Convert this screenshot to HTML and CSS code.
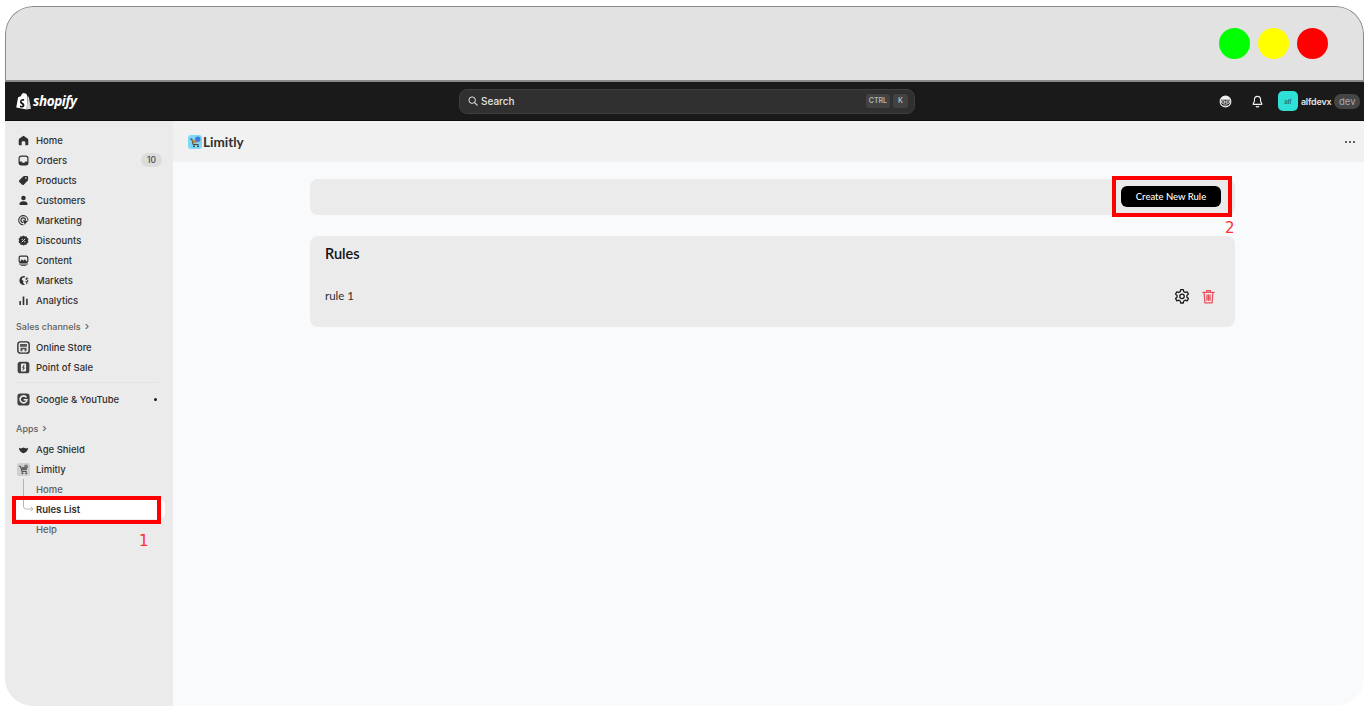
FILE: index.html
```html
<!DOCTYPE html>
<html lang="en">

<head>
  <meta charset="UTF-8" />
  <meta name="viewport" content="width=device-width, initial-scale=1.0" />
  <title>Limitly - Rules List</title>

  <link rel="stylesheet" href="styles.css">
</head>

<body>

  <div class="window">

    <!-- Window title bar -->
    <div class="titlebar">
      <span class="dot dot-green"></span>
      <span class="dot dot-yellow"></span>
      <span class="dot dot-red"></span>
    </div>

    <!-- Shopify top bar -->
    <header class="topbar">
      <div class="brand">
        <svg class="brand-bag" viewBox="0 0 16 18">
          <path fill="#fff" d="M12.2 3.6 11.4 1.6C11 .8 10.4.5 9.8.6 9.5.2 9 0 8.500 0 6.600 0 5.500 2.300 5.100 3.500L2.900 4.200C2.300 4.400 2.200 4.500 2.100 5L.3 15.500 11.400 17.600Z" />
          <path fill="#d8d8d8" d="M12.400 3.700 11.500 17.600 16 16.600 13.700 4.200C13.600 4 13.400 3.900 13.200 3.800Z" />
          <path fill="#1a1a1a" d="M8.800 6.500 8.200 8.400C7.200 7.900 5.900 8 5.900 8.900 5.900 10 9 10.300 9 13 9 15.100 6.400 16.200 4 14.900L4.500 13.100C5.500 13.800 6.900 14 7 13.100 7 11.800 4.200 11.700 4.200 9.200 4.200 7 6.800 5.600 8.800 6.500Z" />
        </svg>
        <span class="brand-name">shopify</span>
      </div>

      <div class="search">
        <svg class="search-icon" viewBox="0 0 12 12">
          <circle cx="5" cy="5" r="3.900" fill="none" stroke="#e3e3e3" stroke-width="1.200" />
          <path d="M8 8 11 11" stroke="#e3e3e3" stroke-width="1.300" stroke-linecap="round" />
        </svg>
        <span class="search-text">Search</span>
        <span class="key">CTRL</span>
        <span class="key key-k">K</span>
      </div>

      <div class="account">
        <svg class="top-icon" viewBox="0 0 14 14">
          <circle cx="7" cy="7" r="5.800" fill="none" stroke="#f1f1f1" stroke-width="1.200" />
          <path fill="#f1f1f1" d="M2 5.200C2.500 2.800 4.500 1.200 7 1.200S11.500 2.800 12 5.200Z" />
          <path fill="none" stroke="#f1f1f1" stroke-width="1" d="M2.200 6.400H6.300V8.800H3.200ZM11.800 6.400H7.700V8.800H10.800Z" />
          <path stroke="#f1f1f1" stroke-width="1" stroke-linecap="round" d="M5 10.800H9" />
        </svg>
        <svg class="top-icon top-icon-bell" viewBox="0 0 14 14">
          <path fill="none" stroke="#f1f1f1" stroke-width="1.200" stroke-linejoin="round" d="M7 1.500C4.900 1.500 3.700 3 3.700 5V6.800L2.300 9.600C2.200 9.900 2.300 10.100 2.600 10.100H11.400C11.700 10.100 11.800 9.900 11.700 9.600L10.300 6.800V5C10.300 3 9.100 1.500 7 1.500Z" />
          <path fill="none" stroke="#f1f1f1" stroke-width="1.200" stroke-linecap="round" d="M5.600 12.200C6.300 12.900 7.700 12.900 8.400 12.200" />
        </svg>
        <span class="avatar">alf</span>
        <span class="account-name">alfdevx</span>
        <span class="dev-pill">dev</span>
      </div>
    </header>

    <div class="body-row">

      <!-- Admin navigation -->
      <nav class="sidebar">
        <a class="nav-item">
          <svg class="nav-icon" viewBox="0 0 12 12"><path fill="#303030" d="M6 .7 10.400 3.800C11 4.300 11.200 4.700 11.200 5.400V10C11.200 10.800 10.700 11.300 9.900 11.300H8V8.200C8 7.400 7.400 6.800 6 6.800S4 7.400 4 8.200V11.300H2.100C1.300 11.300.8 10.800.8 10V5.400C.8 4.700 1 4.300 1.600 3.800Z" /></svg>
          Home
        </a>
        <a class="nav-item">
          <svg class="nav-icon" viewBox="0 0 12 12"><rect x="1.200" y="1.200" width="9.600" height="9.600" rx="2.400" fill="none" stroke="#303030" stroke-width="1.300" /><path fill="#303030" d="M1.200 7H4C4.300 8 5 8.400 6 8.400S7.700 8 8 7H10.800V9C10.800 10.200 10.200 10.800 9 10.800H3C1.800 10.800 1.200 10.200 1.200 9Z" /></svg>
          Orders
          <span class="nav-badge">10</span>
        </a>
        <a class="nav-item">
          <svg class="nav-icon" viewBox="0 0 12 12"><path fill="#303030" d="M6.800 1H10C10.600 1 11 1.400 11 2V5.200C11 5.700 10.800 6.100 10.500 6.400L6.300 10.600C5.800 11.100 5 11.100 4.500 10.600L1.400 7.500C.9 7 .9 6.200 1.400 5.700L5.600 1.500C5.900 1.200 6.300 1 6.800 1ZM8.600 2.500A.9.9 0 1 0 8.600 4.300.9.9 0 0 0 8.600 2.500Z" /></svg>
          Products
        </a>
        <a class="nav-item">
          <svg class="nav-icon" viewBox="0 0 12 12"><circle cx="6" cy="3.300" r="2.500" fill="#303030" /><path fill="#303030" d="M1.500 10.200C1.500 8 3.300 6.800 6 6.800S10.500 8 10.500 10.200C10.500 10.800 10.200 11 9.700 11H2.300C1.800 11 1.500 10.800 1.500 10.200Z" /></svg>
          Customers
        </a>
        <a class="nav-item">
          <svg class="nav-icon" viewBox="0 0 12 12"><path fill="none" stroke="#303030" stroke-width="1.200" stroke-linecap="round" d="M5.500 10.700A5 5 0 1 1 10.800 5.800M5.500 8.100A2.500 2.500 0 1 1 8.200 5.700" /><path fill="#303030" d="M5.300 5.300 11 7.200 8.700 8.400 7.500 10.800Z" /></svg>
          Marketing
        </a>
        <a class="nav-item">
          <svg class="nav-icon" viewBox="0 0 12 12"><path fill="#303030" d="M6 .5 7.500 1.500 9.300 1.400 9.900 3.100 11.400 4.200 10.800 6 11.400 7.800 9.900 8.900 9.300 10.600 7.500 10.500 6 11.500 4.500 10.500 2.700 10.600 2.100 8.900.6 7.800 1.200 6 .6 4.200 2.100 3.100 2.700 1.400 4.500 1.500Z" /><path stroke="#ebebeb" stroke-width="1" stroke-linecap="round" d="M4.400 7.600 7.600 4.400" /><circle cx="4.600" cy="4.700" r=".7" fill="#ebebeb" /><circle cx="7.400" cy="7.300" r=".7" fill="#ebebeb" /></svg>
          Discounts
        </a>
        <a class="nav-item">
          <svg class="nav-icon" viewBox="0 0 12 12"><rect x="1.300" y="1.200" width="9.400" height="6.900" rx="1.500" fill="none" stroke="#303030" stroke-width="1.300" /><path fill="#303030" d="M2 7.500 4.300 4.700 6 6.200 7.500 4.700 10 7.500ZM1.200 9.300H10.800V10.300H1.200ZM3 10.800H9V11.600H3Z" /></svg>
          Content
        </a>
        <a class="nav-item">
          <svg class="nav-icon" viewBox="0 0 12 12"><path fill="#303030" d="M6.500 1A5 5 0 1 0 6.500 11C7.200 11 7.500 10.500 7 10L5.500 8.500 6 6.500 4 5 5 3 7.500 2.500C8 1.700 7.500 1 6.500 1Z" /><path fill="none" stroke="#303030" stroke-width="1.100" stroke-linecap="round" d="M10.700 3.600C10 3 8.700 3.300 8.700 4.300S10.800 5.300 10.800 6.500 9.300 7.900 8.500 7.200M9.600 8.800V9.600" /></svg>
          Markets
        </a>
        <a class="nav-item">
          <svg class="nav-icon" viewBox="0 0 12 12"><path fill="#303030" d="M1.500 6.500H3.200V10.800H1.500ZM5.100 1.500H6.900V10.800H5.100ZM8.900 4.200H10.600V10.800H8.900Z" /></svg>
          Analytics
        </a>

        <div class="nav-label nav-label-sales">Sales channels <span class="nav-chevron">&rsaquo;</span></div>
        <a class="nav-item">
          <svg class="nav-icon nav-icon-big" viewBox="0 0 12 12"><rect x=".8" y=".8" width="10.400" height="10.400" rx="2.300" fill="none" stroke="#303030" stroke-width="1.300" /><path fill="#555" d="M2.800 2.800H9.200V5.400H2.800ZM3.200 6.300H8.800V9.400H7V7.500H5V9.400H3.200Z" /></svg>
          Online Store
        </a>
        <a class="nav-item">
          <svg class="nav-icon nav-icon-big" viewBox="0 0 12 12"><rect x=".6" y=".6" width="10.800" height="10.800" rx="2.400" fill="#404040" /><rect x="3.600" y="2.400" width="4.800" height="7.200" rx=".8" fill="#ebebeb" /><path stroke="#303030" stroke-width=".9" d="M6.600 3.600 5.300 6.300H6.800L5.400 8.400" fill="none" /></svg>
          Point of Sale
        </a>

        <div class="nav-divider"></div>

        <a class="nav-item">
          <svg class="nav-icon nav-icon-big" viewBox="0 0 12 12"><rect x=".4" y=".4" width="11.200" height="11.200" rx="2.600" fill="#404040" /><path fill="none" stroke="#ebebeb" stroke-width="1.500" d="M8.700 4.100A3.200 3.200 0 1 0 9.200 6.200H6.100" /></svg>
          Google &amp; YouTube
          <span class="nav-dot"></span>
        </a>

        <div class="nav-label nav-label-apps">Apps <span class="nav-chevron">&rsaquo;</span></div>
        <a class="nav-item">
          <svg class="nav-icon" viewBox="0 0 12 12"><path fill="#303030" d="M1 4.200 3.200 5 6 3.900 8.800 5 11 4.200C10.900 7.200 8.900 9.400 6 10.200 3.100 9.400 1.100 7.200 1 4.200Z" /></svg>
          Age Shield
        </a>
        <a class="nav-item">
          <svg class="nav-icon nav-icon-big" viewBox="0 0 12 12"><rect width="12" height="12" rx="2" fill="#d0d0d0" /><path fill="none" stroke="#555" stroke-width="1" d="M1.800 3H3.300L4.600 7.800H9" /><path fill="#666" d="M4 3.600H9.800L9 6.600H4.800Z" /><circle cx="8.400" cy="3" r="1.700" fill="#777" /><circle cx="5" cy="9.500" r=".9" fill="#555" /><circle cx="8.500" cy="9.500" r=".9" fill="#555" /></svg>
          Limitly
        </a>
        <div class="subnav">
          <svg class="subnav-line" viewBox="0 0 14 40"><path fill="none" stroke="#b5b5b5" stroke-width="1" d="M1.500 0V27C1.500 29 2.500 30 4.500 30H11M8.800 27.800 11 30 8.800 32.200" /></svg>
          <a class="nav-item nav-sub">Home</a>
          <a class="nav-item nav-sub nav-active">Rules List</a>
          <a class="nav-item nav-sub">Help</a>
        </div>
      </nav>

      <!-- App content -->
      <main class="main">
        <div class="app-header">
          <div class="app-title">
            <svg class="app-logo" viewBox="0 0 14 14">
              <rect width="14" height="14" rx="3" fill="#7dd8f8" />
              <path fill="none" stroke="#4b4b4b" stroke-width="1.100" d="M2 4H3.800L5.200 9.500H10.500" />
              <path fill="#d08a3c" d="M4.300 5H9.300L8.700 8H5.100Z" />
              <circle cx="9.800" cy="4.200" r="2.600" fill="#3f78d8" />
              <circle cx="6" cy="11.300" r="1" fill="#444" />
              <circle cx="10" cy="11.300" r="1" fill="#444" />
            </svg>
            Limitly
          </div>
          <div class="app-more"><span></span><span></span><span></span></div>
        </div>

        <div class="content">
          <div class="panel panel-actions">
            <button class="btn-create">Create New Rule</button>
          </div>

          <div class="panel panel-rules">
            <h2 class="panel-title">Rules</h2>
            <div class="rule-row">
              <span class="rule-name">rule 1</span>
              <svg class="rule-icon" viewBox="0 0 24 24">
                <path fill="none" stroke="#1a1a1a" stroke-width="1.900" stroke-linejoin="round" d="M10 2.500H14L14.600 5.500 16.800 6.700 19.700 5.700 21.700 9.200 19.400 11.200V13.800L21.700 15.800 19.700 19.300 16.800 18.300 14.600 19.500 14 22.500H10L9.400 19.500 7.200 18.300 4.300 19.300 2.300 15.800 4.600 13.800V11.200L2.300 9.200 4.300 5.700 7.200 6.700 9.400 5.500Z" />
                <circle cx="12" cy="12.500" r="3.400" fill="none" stroke="#1a1a1a" stroke-width="1.900" />
              </svg>
              <svg class="rule-icon rule-icon-trash" viewBox="0 0 24 24">
                <path fill="none" stroke="#e8505b" stroke-width="2" stroke-linecap="round" stroke-linejoin="round" d="M3 5.500H21M9 5.500V2.500H15V5.500M5 5.500 6.200 22H17.800L19 5.500M9.500 9.500V18M12 9.500V18M14.500 9.500V18" />
              </svg>
            </div>
          </div>
        </div>
      </main>

    </div>
  </div>

  <!-- Tutorial annotations drawn over the screenshot -->
  <div class="mark mark-rules"></div>
  <div class="mark-num mark-num-1">1</div>
  <div class="mark mark-create"></div>
  <div class="mark-num mark-num-2">2</div>

</body>

</html>
```

FILE: styles.css
```css
/* Page and window frame */
html,
body {
  margin: 0;
  padding: 0;
  height: 727px;
  background-color: #fff;
  overflow: hidden;
}

body {
  position: relative;
  font-family: Inter, "Liberation Sans", sans-serif;
  color: #303030;
}

.window {
  display: flex;
  flex-direction: column;
  margin: 6px 2px 0 5px;
  height: 700px;
  border-radius: 28px;
  overflow: hidden;
  background-color: #f9fafc;
}

/* Grey title bar with the three dots */
.titlebar {
  display: flex;
  align-items: center;
  justify-content: flex-end;
  gap: 8px;
  box-sizing: border-box;
  height: 76px;
  flex: none;
  padding-right: 35px;
  background-color: #e2e2e2;
  border: 1px solid #8a8a8a;
  border-bottom: 2px solid #8a8a8a;
  border-radius: 28px 28px 0 0;
}

.dot {
  width: 31px;
  height: 31px;
  border-radius: 50%;
}

.dot-green {
  background-color: #00ff00;
}

.dot-yellow {
  background-color: #ffff00;
}

.dot-red {
  background-color: #ff0000;
}

/* Shopify top bar */
.topbar {
  display: flex;
  align-items: center;
  box-sizing: border-box;
  height: 39px;
  flex: none;
  background-color: #1a1a1a;
  border-bottom: 1px solid #0c0c0c;
}

.brand {
  display: flex;
  align-items: center;
  gap: 2px;
  width: 454px;
  padding-left: 11px;
  box-sizing: border-box;
}

.brand-bag {
  width: 15px;
  height: 17px;
}

.brand-name {
  font-family: "Open Sans", sans-serif;
  font-size: 13.500px;
  font-style: italic;
  font-weight: 700;
  letter-spacing: -0.4px;
  color: #fff;
}

.search {
  display: flex;
  align-items: center;
  box-sizing: border-box;
  width: 456px;
  height: 25px;
  padding: 0 6px 0 8px;
  background-color: #303030;
  border: 1px solid #3f3f3f;
  border-radius: 8px;
}

.search-icon {
  width: 10px;
  height: 10px;
  margin-right: 3px;
}

.search-text {
  flex: 1;
  font-size: 10px;
  font-weight: 500;
  color: #e3e3e3;
}

.key {
  margin-left: 3px;
  padding: 3px;
  font-size: 7px;
  font-weight: 600;
  line-height: 8px;
  color: #b5b5b5;
  background-color: #424242;
  border-radius: 3px;
}

.key-k {
  padding: 3px 5px;
}

.account {
  display: flex;
  flex: 1;
  align-items: center;
  justify-content: flex-end;
  padding-right: 4px;
}

.top-icon {
  width: 13px;
  height: 13px;
}

.top-icon-bell {
  margin-left: 19px;
  margin-right: 14px;
}

.avatar {
  display: flex;
  align-items: center;
  justify-content: center;
  width: 20px;
  height: 20px;
  font-size: 6px;
  font-weight: 600;
  color: #1e6e68;
  background-color: #2ee0d6;
  border-radius: 5px;
}

.account-name {
  margin-left: 3px;
  font-size: 9px;
  font-weight: 600;
  letter-spacing: -0.2px;
  color: #e3e3e3;
}

.dev-pill {
  margin-left: 3px;
  padding: 2px 4.500px;
  font-size: 9.500px;
  line-height: 11px;
  color: #a8a8a8;
  background-color: #454545;
  border-radius: 7px;
}

/* Sidebar and main area */
.body-row {
  display: flex;
  flex: 1;
  min-height: 0;
}

.sidebar {
  box-sizing: border-box;
  width: 168px;
  padding: 9px 11px 0 8px;
  background-color: #ebebeb;
}

.nav-item {
  display: flex;
  align-items: center;
  box-sizing: border-box;
  height: 20px;
  padding-left: 5px;
  font-size: 9.500px;
  font-weight: 500;
  color: #303030;
  border-radius: 6px;
}

.nav-icon {
  flex: none;
  width: 11px;
  height: 11px;
  margin-right: 7px;
}

.nav-icon-big {
  width: 13px;
  height: 13px;
  margin-left: -1px;
  margin-right: 6px;
}

.nav-badge {
  margin-left: auto;
  padding: 2px 6px;
  font-size: 8.500px;
  line-height: 10px;
  color: #4a4a4a;
  background-color: #dcdcdc;
  border-radius: 7px;
}

.nav-dot {
  width: 3px;
  height: 3px;
  margin-left: auto;
  margin-right: 5px;
  background-color: #1a1a1a;
  border-radius: 50%;
}

.nav-label {
  display: flex;
  align-items: center;
  gap: 4px;
  height: 20px;
  padding-left: 3px;
  font-size: 9px;
  font-weight: 500;
  color: #616161;
}

.nav-label-sales {
  margin-top: 6px;
  margin-bottom: 1px;
}

.nav-label-apps {
  margin-top: 9px;
  margin-bottom: 1px;
}

.nav-chevron {
  font-size: 11px;
  line-height: 11px;
}

.nav-divider {
  height: 1px;
  margin: 5px 3px 6px;
  background-color: #e3e3e3;
}

.subnav {
  position: relative;
}

.subnav-line {
  position: absolute;
  left: 9px;
  top: 0;
  width: 14px;
  height: 40px;
}

.nav-sub {
  padding-left: 23px;
  color: #616161;
}

.nav-active {
  width: 152px;
  font-weight: 600;
  color: #303030;
  background-color: #fff;
}

.main {
  display: flex;
  flex: 1;
  flex-direction: column;
  min-width: 0;
}

.app-header {
  display: flex;
  align-items: center;
  justify-content: space-between;
  box-sizing: border-box;
  height: 41px;
  flex: none;
  padding: 0 9px 0 15px;
  background-color: #f1f1f1;
}

.app-title {
  display: flex;
  align-items: center;
  gap: 1px;
  font-family: Lato, sans-serif;
  font-size: 13.500px;
  font-weight: 700;
  color: #303030;
}

.app-logo {
  width: 14px;
  height: 14px;
}

.app-more {
  display: flex;
  gap: 2px;
}

.app-more span {
  width: 2px;
  height: 2px;
  background-color: #303030;
  border-radius: 50%;
}

.content {
  padding: 17px 129px 0 137px;
}

.panel {
  background-color: #ebebeb;
  border-radius: 8px;
}

.panel-actions {
  display: flex;
  align-items: center;
  justify-content: flex-end;
  box-sizing: border-box;
  height: 36px;
  margin-bottom: 21px;
  padding: 0 14px 2px 0;
}

.btn-create {
  width: 100px;
  height: 21px;
  padding: 0;
  font-family: Lato, sans-serif;
  font-size: 9.500px;
  font-weight: 500;
  color: #fff;
  background-color: #000;
  border: none;
  border-radius: 6px;
}

.panel-rules {
  box-sizing: border-box;
  height: 91px;
  padding: 9px 19px 0 15px;
}

.panel-title {
  margin: 0;
  font-family: Lato, sans-serif;
  font-size: 14.500px;
  font-weight: 600;
  line-height: 17px;
  color: #111;
}

.rule-row {
  display: flex;
  align-items: center;
  margin-top: 24px;
  height: 20px;
}

.rule-name {
  flex: 1;
  font-family: Lato, sans-serif;
  font-size: 11.500px;
  line-height: 18px;
  color: #303030;
}

.rule-icon {
  width: 16px;
  height: 16px;
}

.rule-icon-trash {
  width: 15px;
  height: 15px;
  margin-left: 11px;
}

/* Red tutorial annotations */
.mark {
  position: absolute;
  box-sizing: border-box;
  border: 4px solid #ff0000;
}

.mark-rules {
  left: 12px;
  top: 496px;
  width: 149px;
  height: 28px;
}

.mark-create {
  left: 1112px;
  top: 176px;
  width: 120px;
  height: 41px;
}

.mark-num {
  position: absolute;
  font-family: "DejaVu Sans", sans-serif;
  font-size: 15px;
  line-height: 17px;
  color: #ff3030;
}

.mark-num-1 {
  left: 139px;
  top: 533px;
}

.mark-num-2 {
  left: 1225px;
  top: 220px;
}
```
